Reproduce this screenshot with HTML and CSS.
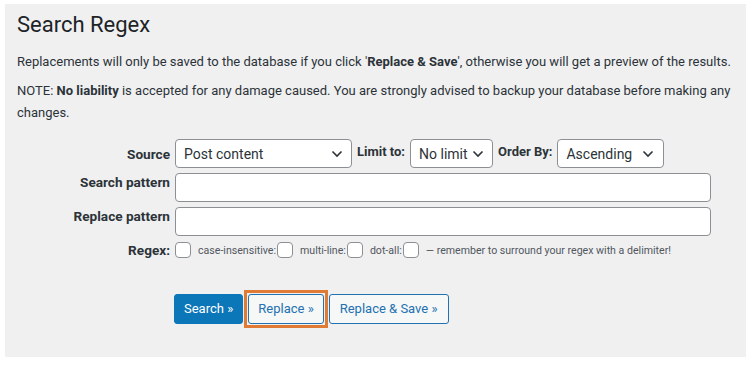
FILE: index.html
```html
<!DOCTYPE html>
<html>
<head>
<meta charset="utf-8">
<link rel="stylesheet" href="styles.css">
</head>
<body>
<div class="panel">
  <h1 class="title">Search Regex</h1>
  <p class="note">Replacements will only be saved to the database if you click '<b>Replace &amp; Save</b>', otherwise you will get a preview of the results.</p>
  <p class="note">NOTE: <b>No liability</b> is accepted for any damage caused. You are strongly advised to backup your database before making any changes.</p>

  <div class="form">
    <div class="row">
      <div class="label">Source</div>
      <div class="controls">
        <div class="select sel-source"><span>Post content</span><svg class="chev" viewBox="0 0 12 8" width="12" height="8"><path d="M1.5 1.5 L6 6 L10.5 1.5" fill="none" stroke="#2c3338" stroke-width="1.6"/></svg></div>
        <span class="inline-label">Limit to:</span>
        <div class="select sel-limit"><span>No limit</span><svg class="chev" viewBox="0 0 12 8" width="12" height="8"><path d="M1.5 1.5 L6 6 L10.5 1.5" fill="none" stroke="#2c3338" stroke-width="1.6"/></svg></div>
        <span class="inline-label">Order By:</span>
        <div class="select sel-order"><span>Ascending</span><svg class="chev" viewBox="0 0 12 8" width="12" height="8"><path d="M1.5 1.5 L6 6 L10.5 1.5" fill="none" stroke="#2c3338" stroke-width="1.6"/></svg></div>
      </div>
    </div>
    <div class="row">
      <div class="label label-top">Search pattern</div>
      <div class="controls"><div class="input"></div></div>
    </div>
    <div class="row">
      <div class="label label-top">Replace pattern</div>
      <div class="controls"><div class="input"></div></div>
    </div>
    <div class="row row-regex">
      <div class="label">Regex:</div>
      <div class="controls small">
        <span class="check"></span>
        <span class="opt">case-insensitive:</span><span class="check"></span>
        <span class="opt">multi-line:</span><span class="check"></span>
        <span class="opt">dot-all:</span><span class="check"></span>
        <span class="opt">— remember to surround your regex with a delimiter!</span>
      </div>
    </div>
  </div>

  <div class="buttons">
    <button class="btn primary">Search »</button>
    <span class="highlight"><button class="btn secondary narrow">Replace »</button></span>
    <button class="btn secondary">Replace &amp; Save »</button>
  </div>
</div>
</body>
</html>
```
FILE: styles.css
```css
html, body {
  margin: 0;
  padding: 0;
  background: #ffffff;
}
body {
  font-family: Roboto, "Open Sans", sans-serif;
  color: #2c3338;
  font-size: 13px;
}
.panel {
  box-sizing: border-box;
  margin: 4px 0 0 5px;
  width: 741px;
  height: 353px;
  background: #f0f0f1;
  padding: 6px 12px 0 12px;
}
.title {
  margin: 0;
  font-size: 22px;
  font-weight: 400;
  line-height: 30px;
  color: #1d2327;
}
.note {
  margin: 11px 0 0 0;
  font-size: 13px;
  line-height: 22px;
  white-space: nowrap;
}
.note + .note {
  margin-top: 7px;
  white-space: normal;
}
.note b { font-weight: 700; }
.form {
  margin-top: 15px;
  display: flex;
  flex-direction: column;
  gap: 5px;
}
.row {
  display: flex;
  align-items: center;
}
.label {
  box-sizing: border-box;
  width: 158px;
  padding-right: 5px;
  text-align: right;
  font-weight: 700;
  font-size: 13.6px;
  flex: none;
}
.label-top {
  align-self: flex-start;
  padding-top: 1px;
}
.controls {
  display: flex;
  align-items: center;
  gap: 5px;
  flex: 1;
}
.select {
  box-sizing: border-box;
  height: 29px;
  border: 1px solid #8c8f94;
  border-radius: 4px;
  background: #fff;
  display: flex;
  align-items: center;
  justify-content: space-between;
  padding: 0 8px 0 8px;
  font-size: 14px;
}
.sel-source { width: 177px; }
.sel-limit { width: 83px; }
.sel-order { width: 107px; padding-right: 9px; }
.inline-label {
  font-weight: 700;
  font-size: 13px;
  margin-top: -4px;
}
.input {
  box-sizing: border-box;
  width: 536px;
  height: 29px;
  border: 1px solid #8c8f94;
  border-radius: 4px;
  background: #fff;
}
.row-regex {
  margin-top: 1px;
}
.small {
  gap: 0;
  font-size: 10.6px;
  color: #50575e;
}
.check {
  box-sizing: border-box;
  width: 16px;
  height: 16px;
  border: 1px solid #8c8f94;
  border-radius: 4px;
  background: #fff;
  flex: none;
}
.opt {
  margin-left: 7px;
  margin-right: 1px;
}
.buttons {
  margin: 36px 0 0 157px;
  display: flex;
  align-items: center;
  gap: 5px;
}
.btn {
  box-sizing: border-box;
  height: 30px;
  border-radius: 3px;
  font-family: inherit;
  font-size: 13px;
  padding: 0 10px;
  margin: 0;
  line-height: 28px;
  white-space: nowrap;
}
.primary {
  background: #0b76b8;
  border: 1px solid #0b76b8;
  color: #fff;
  padding: 0 9px;
}
.secondary {
  background: #f6f7f7;
  border: 1px solid #2271b1;
  color: #2271b1;
}
.narrow {
  padding: 0 9px;
}
.highlight {
  display: flex;
  border: 3px solid #e07b35;
  padding: 1px;
  margin: -4px;
}
```
